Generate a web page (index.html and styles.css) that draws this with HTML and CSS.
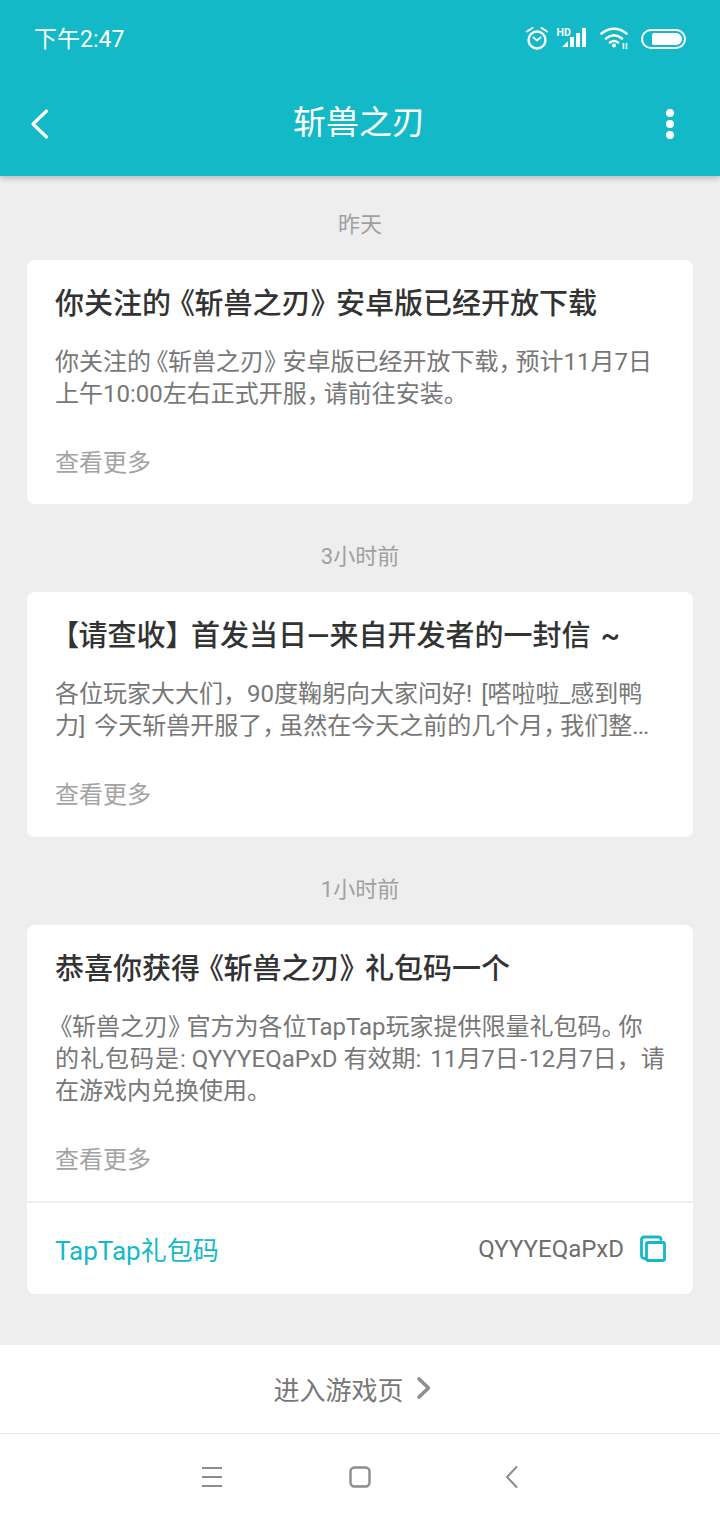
FILE: index.html
```html
<!DOCTYPE html>
<html lang="zh-CN">
<head>
<meta charset="utf-8">
<title>斩兽之刃</title>
<link rel="stylesheet" href="styles.css">
</head>
<body>
<header class="header">
  <div class="status">
    <span class="time">下午2:47</span>
    <div class="status-icons">
      <svg class="i-alarm" width="22" height="24" viewBox="0 0 22 24" fill="none" stroke="#fff"><circle cx="11" cy="13" r="8.500" stroke-width="2.400"/><path d="M7.500 10.500l3.500 3 3.500-3" stroke-width="2" stroke-linecap="round" stroke-linejoin="round"/><path d="M1 4.500L6.500 1M21 4.500L15.500 1" stroke-width="2" stroke-linecap="round"/></svg>
      <svg class="i-signal" width="30" height="24" viewBox="0 0 30 24" fill="#fff"><text x="0.500" y="9" class="hd">HD</text><path d="M6 20l6-6v6zM14 20V10h4v10zM20 20V6h4v14zM26 20V1h4v19z"/></svg>
      <svg class="i-wifi" width="30" height="24" viewBox="0 0 30 24" fill="none" stroke="#fff" stroke-width="2.600" stroke-linecap="round"><path d="M1.500 6.500Q14-3 26.500 6.500M6 11.500Q14 5 22 11.500M10 15.500Q14 12.500 18 15.500"/><circle cx="14" cy="18.500" r="2" fill="#fff" stroke="none"/><path d="M23.500 22v-6M26.500 22v-6" stroke-width="1.600" stroke-linecap="butt"/></svg>
      <span class="battery"><span class="battery-fill"></span></span>
    </div>
  </div>
  <nav class="toolbar">
    <svg class="back" width="20" height="32" viewBox="0 0 20 32" fill="none" stroke="#fff" stroke-width="3.200" stroke-linecap="round" stroke-linejoin="round"><path d="M16.500 3L3 16l13.500 13"/></svg>
    <h1 class="page-title">斩兽之刃</h1>
    <span class="more"><i></i><i></i><i></i></span>
  </nav>
</header>

<main class="feed">
  <section class="group">
    <p class="date">昨天</p>
    <article class="card">
      <div class="card-body">
        <h2 class="card-title">你关注的<span class="bo">《</span>斩兽之刃<span class="bc">》</span>安卓版已经开放下载</h2>
        <p class="card-text">你关注的<span class="bo">《</span>斩兽之刃<span class="bc">》</span>安卓版已经开放下载<span class="pu">，</span>预计11月7日<br>上午10:00左右正式开服<span class="pu">，</span>请前往安装。</p>
        <a class="more-link">查看更多</a>
      </div>
    </article>
  </section>
  <section class="group">
    <p class="date">3小时前</p>
    <article class="card">
      <div class="card-body">
        <h2 class="card-title"><span class="bo">【</span>请查收<span class="bc">】</span>首发当日—来自开发者的一封信<span class="sp"> </span>~</h2>
        <p class="card-text">各位玩家大大们，90度鞠躬向大家问好!<span class="sp"> </span>[嗒啦啦_感到鸭<br>力]<span class="sp"> </span>今天斩兽开服了<span class="pu">，</span>虽然在今天之前的几个月<span class="pu">，</span>我们整<span class="dots">...</span></p>
        <a class="more-link">查看更多</a>
      </div>
    </article>
  </section>
  <section class="group">
    <p class="date">1小时前</p>
    <article class="card">
      <div class="card-body">
        <h2 class="card-title">恭喜你获得<span class="bo">《</span>斩兽之刃<span class="bc">》</span>礼包码一个</h2>
        <p class="card-text"><span class="bo">《</span>斩兽之刃<span class="bc">》</span>官方为各位TapTap玩家提供限量礼包码<span class="pu">。</span>你<br><span class="wide">的礼包码是</span>: QYYYEQaPxD 有效期:<span class="sp"> </span>11月7日<span class="dash">-</span>12月7日，请<br>在游戏内兑换使用。</p>
        <a class="more-link">查看更多</a>
      </div>
      <div class="gift">
        <span class="gift-name">TapTap礼包码</span>
        <span class="gift-code">QYYYEQaPxD</span>
        <svg class="copy" width="28" height="28" viewBox="0 0 28 28" fill="none" stroke="#14b9c8" stroke-width="2.800"><path d="M6 23.500c-2 0-3.500-1-3.500-3V4.500c0-1.500 1-2.500 2.500-2.500h14c2 0 3 1 3 2.500" stroke-linecap="round"/><rect x="7.500" y="7.500" width="18" height="18" rx="1.500"/></svg>
      </div>
    </article>
  </section>
</main>

<a class="enter">
  <span>进入游戏页</span>
  <svg width="16" height="24" viewBox="0 0 16 24" fill="none" stroke="#8f8f8f" stroke-width="3.600" stroke-linecap="round" stroke-linejoin="round"><path d="M3 3l9.500 9L3 21"/></svg>
</a>

<footer class="sysnav">
  <svg width="22" height="20" viewBox="0 0 22 20" fill="none" stroke="#8c8c8c" stroke-width="2"><path d="M1 1h20M1 10h20M1 19h20"/></svg>
  <svg width="22" height="22" viewBox="0 0 22 22" fill="none" stroke="#8c8c8c" stroke-width="2.400"><rect x="1.500" y="1.500" width="19" height="19" rx="4"/></svg>
  <svg width="22" height="24" viewBox="0 0 22 24" fill="none" stroke="#8c8c8c" stroke-width="2" stroke-linecap="round" stroke-linejoin="round"><path d="M19.500 2L10 12l9.500 10"/></svg>
</footer>
</body>
</html>
```
FILE: styles.css
```css
* { box-sizing: border-box; }
html, body { margin: 0; padding: 0; }
body {
  width: 720px;
  height: 1520px;
  display: flex;
  flex-direction: column;
  background: #eeeeee;
  font-family: Roboto, "Noto Sans CJK SC", sans-serif;
  overflow: hidden;
}
.header {
  height: 176px;
  flex: none;
  background: #14b9c8;
  color: #fff;
  box-shadow: 0 2px 6px rgba(0, 0, 0, .25);
  position: relative;
  z-index: 1;
}
.status {
  height: 80px;
  padding: 0 34px 2px 34px;
  display: flex;
  align-items: center;
  justify-content: space-between;
}
.time { font-size: 23px; padding-bottom: 4px; }
.status-icons { display: flex; align-items: center; }
.i-alarm { margin-right: 8px; }
.i-signal { margin-right: 14px; overflow: visible; }
.i-wifi { margin-right: 11px; }
.hd { font: bold 10.500px Roboto, sans-serif; }
.battery {
  width: 45px;
  height: 20px;
  border: 2.500px solid #fff;
  border-radius: 10px;
  padding: 2px;
  display: flex;
  justify-content: flex-end;
}
.battery-fill { width: 30px; background: #fff; border-radius: 2px 6px 6px 2px; }
.toolbar {
  height: 96px;
  padding: 0 46px 8px 30px;
  display: flex;
  align-items: center;
  justify-content: space-between;
}
.page-title {
  margin: 0 0 0 2px;
  padding-bottom: 2px;
  font-size: 33px;
  line-height: 40px;
  font-weight: 400;
}
.more { display: flex; flex-direction: column; gap: 3px; }
.more i { width: 8px; height: 8px; border-radius: 50%; background: #fff; }
.feed { flex: 1; padding: 0 27px; }
.date {
  margin: 0;
  height: 84px;
  padding-top: 35px;
  line-height: 28px;
  text-align: center;
  font-size: 22px;
  color: #a0a0a0;
}
.group + .group .date { height: 88px; padding-top: 39px; }
.card { background: #fff; border-radius: 8px; }
.card-body { padding: 25px 28px 25.400px; }
.card-title {
  margin: 0;
  font-size: 29px;
  line-height: 38px;
  font-weight: 500;
  color: #333;
}
.card-title .bo { margin-left: 9px; }
.card-title .bc { letter-spacing: -3.500px; }
.card-text {
  margin: 23px -10px 0 0;
  font-size: 24px;
  line-height: 32px;
  color: #777;
  white-space: nowrap;
}
.bo { font-feature-settings: "palt"; margin-left: 5px; }
.bc { letter-spacing: -5.500px; }
.pu { letter-spacing: -7px; }
.sp { margin-right: 3px; }
.wide { letter-spacing: 1px; }
.dots { letter-spacing: -1px; }
.dash { margin: 0 1.500px; }
.more-link {
  display: block;
  margin-top: 37px;
  font-size: 24px;
  line-height: 32px;
  color: #a3a3a3;
}
.gift {
  height: 92.600px;
  border-top: 2px solid #eeeeee;
  padding: 1px 26px 0 28px;
  display: flex;
  align-items: center;
}
.gift-name { font-size: 26px; color: #14b9c8; margin-right: auto; }
.gift-code { font-size: 24px; color: #6e6e6e; margin-right: 15px; margin-left: -1px; }
.enter {
  height: 89px;
  flex: none;
  background: #fff;
  border-bottom: 1px solid #e8e8e8;
  padding: 0 15px 2px 0;
  display: flex;
  align-items: center;
  justify-content: center;
  gap: 12px;
  font-size: 26px;
  color: #777;
}
.sysnav {
  height: 86px;
  flex: none;
  background: #fff;
  padding: 0 201px;
  display: flex;
  align-items: center;
  justify-content: space-between;
}
```
